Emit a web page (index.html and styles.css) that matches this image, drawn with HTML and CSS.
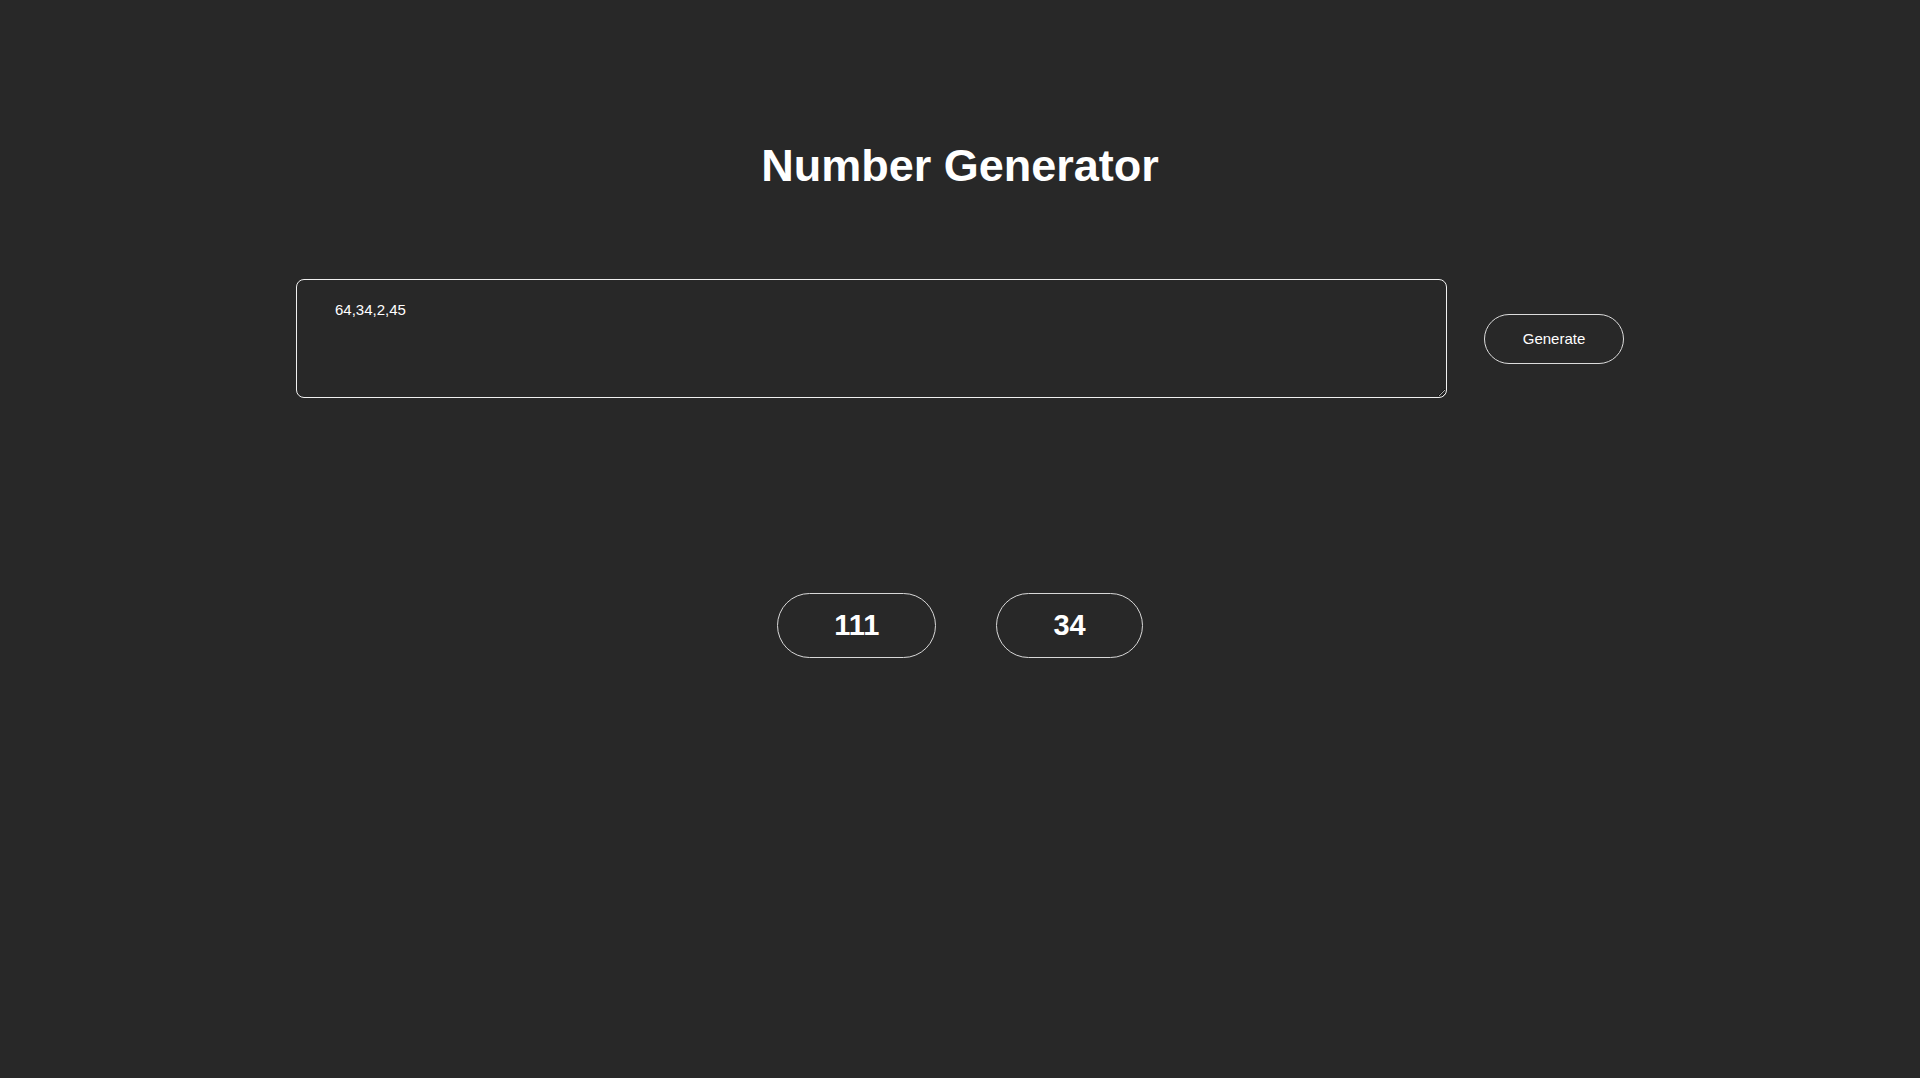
FILE: index.html
```html
<!DOCTYPE html>
<html lang="en">
<head>
<meta charset="utf-8">
<title>Number Generator</title>
<link rel="stylesheet" href="styles.css">
</head>
<body>
<main class="app">
  <h1 class="title">Number Generator</h1>
  <div class="input-row">
    <textarea class="numbers">64,34,2,45</textarea>
    <button class="generate">Generate</button>
  </div>
  <div class="results">
    <div class="pill">111</div>
    <div class="pill">34</div>
  </div>
</main>
</body>
</html>
```

FILE: styles.css
```css
html, body {
  margin: 0;
  padding: 0;
  background: #282828;
  color: #ffffff;
  font-family: "Liberation Sans", Arial, sans-serif;
  height: 100%;
}

.app {
  display: flex;
  flex-direction: column;
  align-items: center;
  padding-top: 141px;
}

.title {
  margin: 0;
  font-size: 45px;
  line-height: 50px;
  font-weight: 700;
  color: #ffffff;
}

.input-row {
  margin-top: 88px;
  display: flex;
  align-items: center;
  gap: 37px;
}

.numbers {
  box-sizing: border-box;
  width: 1151px;
  height: 119px;
  padding: 21px 38px;
  background: #282828;
  color: #ffffff;
  border: 1px solid #f0f0f0;
  border-radius: 8px;
  font-family: "Liberation Sans", Arial, sans-serif;
  font-size: 15px;
  line-height: 18px;
  outline: none;
}

.generate {
  box-sizing: border-box;
  width: 140px;
  height: 50px;
  background: #282828;
  color: #ffffff;
  border: 1px solid #dcdcdc;
  border-radius: 25px;
  font-family: "Liberation Sans", Arial, sans-serif;
  font-size: 15px;
  cursor: pointer;
}

.results {
  margin-top: 195px;
  display: flex;
  gap: 60px;
}

.pill {
  box-sizing: border-box;
  height: 65px;
  padding: 0 56px;
  display: flex;
  align-items: center;
  justify-content: center;
  border: 1px solid #d8d8d8;
  border-radius: 33px;
  font-size: 29px;
  font-weight: 700;
}
```
